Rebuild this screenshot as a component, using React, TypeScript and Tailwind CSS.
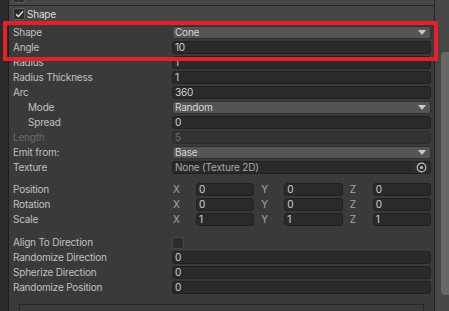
import React from "react";

const LABEL = "text-[#c0c0c0]";

function TextField({ value, disabled }: { value: string; disabled?: boolean }) {
  return (
    <div
      className={
        disabled
          ? "flex h-[13px] items-center rounded-[3px] border border-[#2c2c2c] bg-[#333333] pl-[2px] text-[#6a6a6a]"
          : "flex h-[13px] items-center rounded-[3px] border border-[#212121] bg-[#2a2a2a] pl-[2px] text-[#d2d2d2]"
      }
    >
      {value}
    </div>
  );
}

function Dropdown({ value }: { value: string }) {
  return (
    <div className="flex h-[13px] items-center justify-between rounded-[3px] border border-[#303030] bg-[#545454] pl-[2px] pr-[4px] text-[#d6d6d6]">
      <span>{value}</span>
      <svg width="8" height="5" viewBox="0 0 8 5">
        <path d="M0 0 H8 L4 5 Z" fill="#c8c8c8" />
      </svg>
    </div>
  );
}

function ObjectField({ value }: { value: string }) {
  return (
    <div className="flex h-[13px] items-center justify-between rounded-[3px] border border-[#212121] bg-[#2a2a2a] pl-[2px] text-[#a8a8a8]">
      <span>{value}</span>
      <div className="flex h-full w-[18px] items-center justify-center rounded-r-[3px] bg-[#2e2e2e]">
        <svg width="11" height="11" viewBox="0 0 11 11">
          <circle cx="5.5" cy="5.5" r="4.3" fill="none" stroke="#bdbdbd" strokeWidth="1.2" />
          <circle cx="5.5" cy="5.5" r="1.6" fill="#bdbdbd" />
        </svg>
      </div>
    </div>
  );
}

function Row({
  label,
  indent,
  disabled,
  className,
  children,
}: {
  label: string;
  indent?: boolean;
  disabled?: boolean;
  className?: string;
  children: React.ReactNode;
}) {
  return (
    <div className={"flex h-[15px] items-center " + (className ?? "")}>
      <div
        className={
          "w-[159px] shrink-0 whitespace-nowrap " +
          (indent ? "pl-[15px] " : "") +
          (disabled ? "text-[#6a6a6a]" : LABEL)
        }
      >
        {label}
      </div>
      <div className="min-w-0 flex-1">{children}</div>
    </div>
  );
}

function VecRow({ label, v, className }: { label: string; v: string; className?: string }) {
  return (
    <Row label={label} className={className}>
      <div className="grid grid-cols-3 gap-[6px]">
        {["X", "Y", "Z"].map((a) => (
          <div key={a} className="flex items-center">
            <div className="w-[24px] shrink-0 pl-[1px] text-[#a6a6a6]">{a}</div>
            <div className="min-w-0 flex-1">
              <TextField value={v} />
            </div>
          </div>
        ))}
      </div>
    </Row>
  );
}

function HeaderCheck() {
  return (
    <div className="flex h-[12px] w-[12px] items-center justify-center rounded-[2px] border border-[#5c5c5c] bg-[#2c2c2c]">
      <svg width="9" height="8" viewBox="0 0 9 8">
        <path d="M1 4.2 L3.4 6.5 L8 1.2" fill="none" stroke="#e6e6e6" strokeWidth="1.3" />
      </svg>
    </div>
  );
}

export default function App() {
  return (
    <div
      className="relative flex h-[311px] w-[449px] overflow-hidden bg-[#3a3a3a] text-[10px] leading-[13px] tracking-[-0.2px]"
      style={{ fontFamily: "Inter, 'Noto Sans', sans-serif" }}
    >
      {/* left strip */}
      <div className="w-[9px] shrink-0 border-r border-[#1e1e1e] bg-[#2a2a2a]" />

      {/* content */}
      <div className="flex min-w-0 flex-1 flex-col">
        <div className="mt-[-12px] flex h-[18px] shrink-0 items-center gap-[2px] border-b border-[#262626] bg-[#464646] pl-[4px]">
          <HeaderCheck />
          <span className="text-[#d8d8d8]">Emission</span>
        </div>
        <div className="flex h-[17px] shrink-0 items-center gap-[2px] border-b border-[#2e2e2e] bg-[#454545] pl-[4px]">
          <HeaderCheck />
          <span className="text-[#dcdcdc]">Shape</span>
        </div>

        <div className="flex flex-col pl-[4px] pr-[3px] pt-[2px]">
          <Row label="Shape">
            <Dropdown value="Cone" />
          </Row>
          <Row label="Angle">
            <TextField value="10" />
          </Row>
          <Row label="Radius">
            <TextField value="1" />
          </Row>
          <Row label="Radius Thickness">
            <TextField value="1" />
          </Row>
          <Row label="Arc">
            <TextField value="360" />
          </Row>
          <Row label="Mode" indent>
            <Dropdown value="Random" />
          </Row>
          <Row label="Spread" indent>
            <TextField value="0" />
          </Row>
          <Row label="Length" disabled>
            <TextField value="5" disabled />
          </Row>
          <Row label="Emit from:">
            <Dropdown value="Base" />
          </Row>
          <Row label="Texture">
            <ObjectField value="None (Texture 2D)" />
          </Row>

          <VecRow label="Position" v="0" className="mt-[7px]" />
          <VecRow label="Rotation" v="0" />
          <VecRow label="Scale" v="1" />

          <Row label="Align To Direction" className="mt-[8px]">
            <div className="h-[12px] w-[12px] rounded-[2px] border border-[#474747] bg-[#2d2d2d]" />
          </Row>
          <Row label="Randomize Direction">
            <TextField value="0" />
          </Row>
          <Row label="Spherize Direction">
            <TextField value="0" />
          </Row>
          <Row label="Randomize Position">
            <TextField value="0" />
          </Row>
        </div>

        <div className="ml-[10px] mr-[10px] mt-[9px] h-[30px] shrink-0 border border-[#262626] bg-[#3a3a3a]" />
      </div>

      {/* scrollbar */}
      <div className="relative w-[15px] shrink-0 border-l border-[#262626] bg-[#474747]">
        <div className="absolute left-[6px] top-[52px] h-[243px] w-[12px] rounded-[4px] bg-[#676767]" />
      </div>

      {/* red annotation box */}
      <div className="pointer-events-none absolute left-[3px] top-[21px] h-[40px] w-[435px] border-4 border-[#e5202a]" />
    </div>
  );
}
